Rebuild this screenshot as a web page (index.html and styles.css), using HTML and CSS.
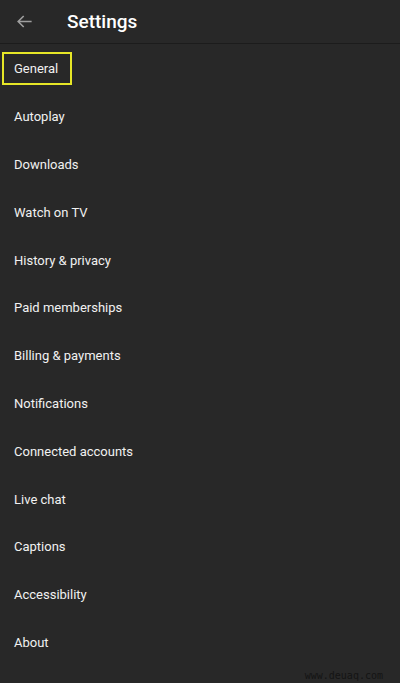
FILE: index.html
```html
<!DOCTYPE html>
<html lang="en">

<head>
    <meta charset="UTF-8">
    <meta name="viewport" content="width=device-width, initial-scale=1.0">
    <title>Settings</title>
    <link rel="stylesheet" href="styles.css">
</head>

<body>
    <header class="top-bar">
        <button class="back-btn" aria-label="Back">
            <svg width="19" height="19" viewBox="0 0 24 24">
                <path d="M21 12H4M11 5l-7 7 7 7" fill="none" stroke="#9e9e9e" stroke-width="2" />
            </svg>
        </button>
        <h1>Settings</h1>
    </header>
    <ul class="menu">
        <li><span class="highlight">General</span></li>
        <li><span>Autoplay</span></li>
        <li><span>Downloads</span></li>
        <li><span>Watch on TV</span></li>
        <li><span>History &amp; privacy</span></li>
        <li><span>Paid memberships</span></li>
        <li><span>Billing &amp; payments</span></li>
        <li><span>Notifications</span></li>
        <li><span>Connected accounts</span></li>
        <li><span>Live chat</span></li>
        <li><span>Captions</span></li>
        <li><span>Accessibility</span></li>
        <li><span>About</span></li>
    </ul>
    <div class="watermark">www.deuaq.com</div>
</body>

</html>
```

FILE: styles.css
```css
body {
    margin: 0;
    background: #282828;
    font-family: Roboto, "Liberation Sans", sans-serif;
    color: #f1f1f1;
    height: 683px;
    overflow: hidden;
    position: relative;
}

.top-bar {
    display: flex;
    align-items: center;
    height: 43px;
    border-bottom: 1px solid #1c1c1c;
}

.back-btn {
    background: none;
    border: none;
    padding: 0;
    margin-left: 15px;
    width: 19px;
    height: 19px;
    display: flex;
}

.top-bar h1 {
    margin: 0 0 0 33px;
    font-size: 19px;
    font-weight: 500;
    color: #ffffff;
}

.menu {
    list-style: none;
    margin: 1px 0 0;
    padding: 0;
}

.menu li {
    height: 47.8px;
    display: flex;
    align-items: center;
    padding-left: 14px;
    font-size: 13px;
}

.highlight {
    margin-left: -12px;
    padding: 7px 12px 7px 10px;
    border: 2px solid #e6e627;
}

.watermark {
    position: absolute;
    right: 17px;
    bottom: 2px;
    font-family: "DejaVu Sans Mono", monospace;
    font-size: 10px;
    color: #141414;
}
```
